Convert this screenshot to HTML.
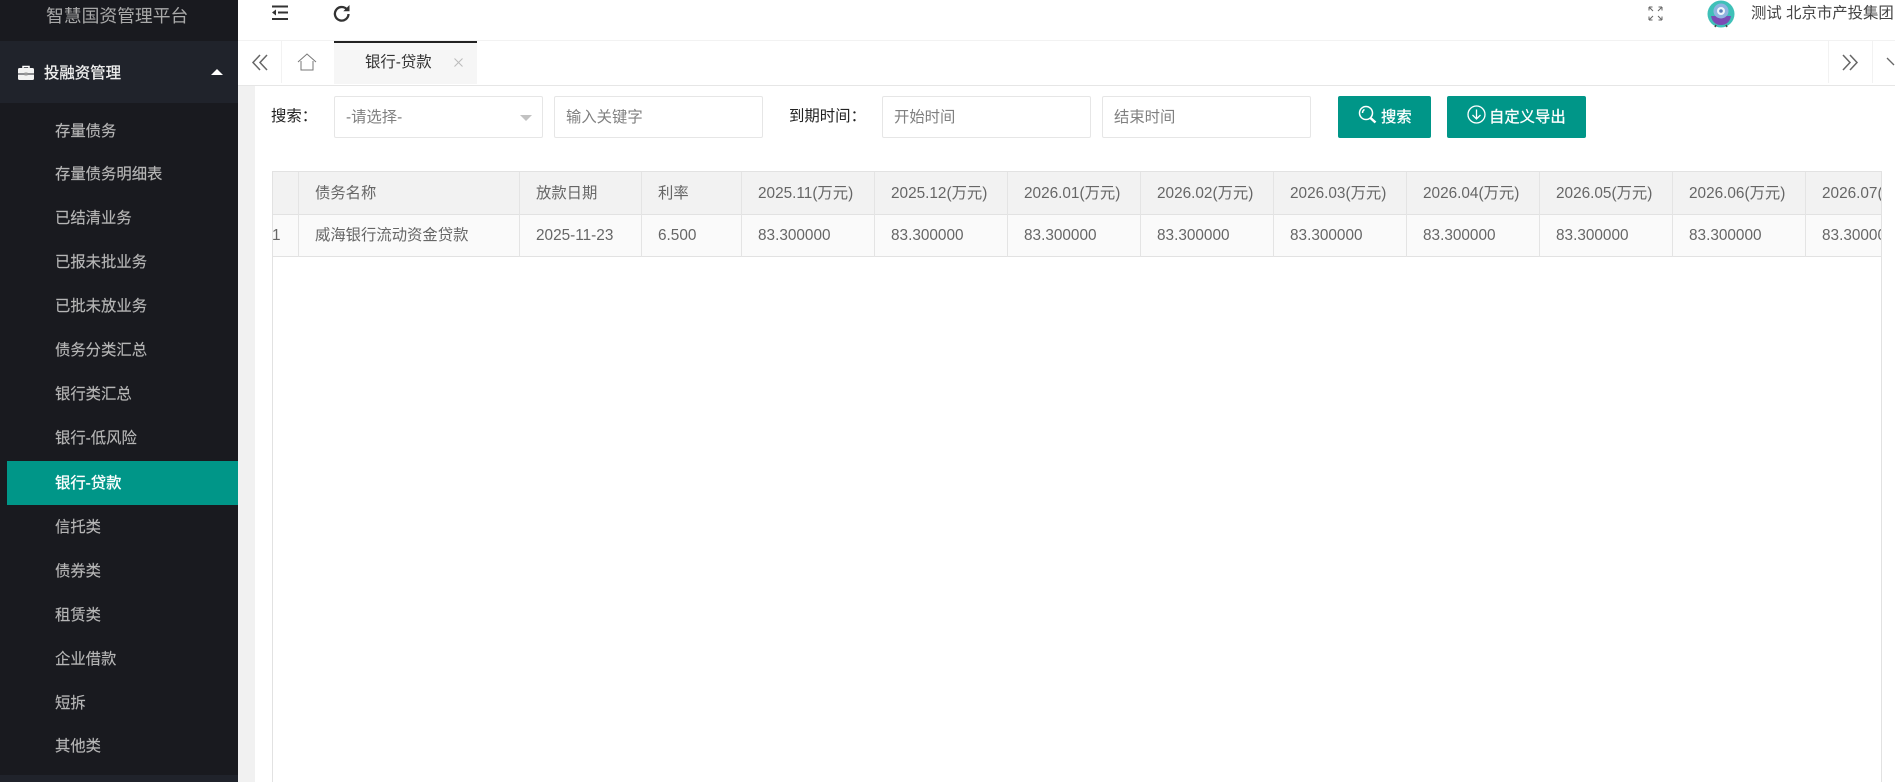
<!DOCTYPE html>
<html lang="zh"><head><meta charset="utf-8"><title>银行-贷款</title>
<style>
*{box-sizing:border-box}
html,body{margin:0;padding:0;width:1895px;height:782px;overflow:hidden;background:#fff;font-family:"Liberation Sans","Noto Sans CJK SC",sans-serif;font-size:15.350px;color:#666}
.a{position:absolute;white-space:nowrap}
#side{position:absolute;left:0;top:0;width:238px;height:782px;background:#191a1f}
.m{position:absolute;left:55px;color:#b6b6b6;font-size:15.350px;line-height:44px;height:44px;white-space:nowrap;-webkit-text-stroke:.15px #b6b6b6}
.in{position:absolute;top:96px;height:42px;width:209px;border:1px solid #e6e6e6;border-radius:2px;background:#fff;line-height:42px;padding-left:11px;color:#808080;font-size:15.350px}
.btn{position:absolute;top:96px;height:42px;background:#009688;border-radius:2px;color:#fff;line-height:44px;font-size:15.350px;-webkit-text-stroke:.25px #fff}
#tb{position:absolute;left:272px;top:171px;width:1610px;height:611px;border:1px solid #e2e2e2;border-bottom:0;overflow:hidden;background:#fff}
.h,.r{position:absolute;top:0;left:0;width:1700px}
.h{height:43px;background:#f2f2f2;border-bottom:1px solid #e2e2e2}
.r{top:43px;height:42px;background:#fafafa;border-bottom:1px solid #e2e2e2}
.v{position:absolute;top:0;width:1px;height:85px;background:#e4e4e4;z-index:2}
.t{position:absolute;white-space:nowrap;color:#666;font-size:15.350px}
.h .t{line-height:43px;top:0}
.r .t{line-height:41px;top:0}
</style></head><body>

<div id="side">
  <div class="a" style="left:46px;top:3px;font-size:17.800px;line-height:26px;color:#a9a9a9">智慧国资管理平台</div>
  <div class="a" style="left:0;top:41px;width:238px;height:62px;background:#20232b"></div>
  <svg class="a" style="left:17px;top:65px" width="18" height="16" viewBox="0 0 18 16"><path d="M6 3V1.500h6V3" fill="none" stroke="#fff" stroke-width="1.500"/><rect x="1" y="3" width="16" height="12" rx="1.500" fill="#f2f2f2"/><rect x="1" y="8.500" width="16" height="1" fill="#20232b"/><rect x="7.500" y="7.500" width="3" height="3" fill="#999"/></svg>
  <div class="a" style="left:44px;top:61px;line-height:26px;font-size:15.400px;color:#f0f0f0;-webkit-text-stroke:.3px #f0f0f0">投融资管理</div>
  <div class="a" style="left:211px;top:69px;width:0;height:0;border-left:6px solid transparent;border-right:6px solid transparent;border-bottom:6px solid #fff"></div>
  <div class="m" style="top:110px">存量债务</div>
  <div class="m" style="top:153px">存量债务明细表</div>
  <div class="m" style="top:197px">已结清业务</div>
  <div class="m" style="top:241px">已报未批业务</div>
  <div class="m" style="top:285px">已批未放业务</div>
  <div class="m" style="top:329px">债务分类汇总</div>
  <div class="m" style="top:373px">银行类汇总</div>
  <div class="m" style="top:417px">银行-低风险</div>
  <div class="a" style="left:7px;top:461px;width:231px;height:44px;background:#009688"></div>
  <div class="m" style="top:462px;color:#fff;-webkit-text-stroke:.3px #fff">银行-贷款</div>
  <div class="m" style="top:506px">信托类</div>
  <div class="m" style="top:550px">债券类</div>
  <div class="m" style="top:594px">租赁类</div>
  <div class="m" style="top:638px">企业借款</div>
  <div class="m" style="top:682px">短拆</div>
  <div class="m" style="top:725px">其他类</div>
  <div class="a" style="left:0;top:775px;width:238px;height:7px;background:#20232b"></div>
</div>

<div class="a" style="left:238px;top:85px;width:17px;height:697px;background:#f1f1f1"></div>

<!-- top bar -->
<svg class="a" style="left:271px;top:5px" width="18" height="16" viewBox="0 0 18 16"><path d="M1 1.500h16M7 7.500h10M1 14h16" stroke="#333" stroke-width="2" fill="none"/><path d="M1 7.500L5 4.500v6z" fill="#333"/></svg>
<svg class="a" style="left:333px;top:4px" width="18" height="19" viewBox="0 0 18 19"><path d="M15.500 10a6.800 6.800 0 1 1-2-5" fill="none" stroke="#333" stroke-width="2.300"/><path d="M16.500 1v6.200h-6.200z" fill="#333"/></svg>
<svg class="a" style="left:1648px;top:6px" width="15" height="15" viewBox="0 0 15 15" fill="none" stroke="#666" stroke-width="1"><path d="M1 1l4 4M1 1v3.500M1 1h3.500M14 1l-4 4M14 1v3.500M14 1h-3.500M1 14l4-4M1 14v-3.500M1 14h3.500M14 14l-4-4M14 14v-3.500M14 14h-3.500"/></svg>
<svg class="a" style="left:1707px;top:0" width="28" height="28" viewBox="0 0 28 28"><circle cx="14" cy="14" r="13.500" fill="#3fc0b8"/><path d="M4 16c1 6 5 9 10 9s9-3 10-9z" fill="#7a4bb5"/><circle cx="14" cy="11" r="7.500" fill="#8fb4e0"/><circle cx="14" cy="11" r="4" fill="#eef5fc"/><circle cx="14" cy="11" r="1.800" fill="#5a7fb8"/><path d="M9 25l-1 2M19 25l1 2" stroke="#444" stroke-width="1.500"/></svg>
<div class="a" style="left:1751px;top:3px;line-height:22px;color:#444;font-size:15.400px">测试 北京市产投集团</div>

<!-- tab bar -->
<div class="a" style="left:238px;top:40px;width:1657px;height:1px;background:#f2f2f2"></div>
<div class="a" style="left:238px;top:85px;width:1657px;height:1px;background:#e6e6e6"></div>
<div class="a" style="left:281px;top:41px;width:1px;height:42px;background:#f2f2f2"></div>
<div class="a" style="left:1828px;top:41px;width:1px;height:42px;background:#f2f2f2"></div>
<div class="a" style="left:1872px;top:41px;width:1px;height:42px;background:#f2f2f2"></div>
<svg class="a" style="left:251px;top:54px" width="18" height="17" viewBox="0 0 18 17" fill="none" stroke="#666" stroke-width="1.500"><path d="M9 1L2 8.500 9 16M16 1L9 8.500 16 16"/></svg>
<svg class="a" style="left:297px;top:53px" width="20" height="18" viewBox="0 0 20 18" fill="none" stroke="#777" stroke-width="1"><path d="M1 9L10 1l9 8M4 8v9h12V8"/></svg>
<div class="a" style="left:334px;top:41px;width:143px;height:43px;background:#f6f6f6;border-top:2px solid #222"></div>
<div class="a" style="left:365px;top:51px;line-height:24px;color:#333;font-size:15.400px">银行-贷款</div>
<svg class="a" style="left:454px;top:58px" width="9" height="9" viewBox="0 0 9 9" stroke="#bbb" stroke-width="1"><path d="M0.500 0.500l8 8M8.500 0.500l-8 8"/></svg>
<svg class="a" style="left:1841px;top:54px" width="18" height="17" viewBox="0 0 18 17" fill="none" stroke="#666" stroke-width="1.500"><path d="M2 1l7 7.500L2 16M9 1l7 7.500L9 16"/></svg>
<svg class="a" style="left:1886px;top:57px" width="9" height="11" viewBox="0 0 9 11" fill="none" stroke="#666" stroke-width="1.300"><path d="M1 1l7 7"/></svg>

<!-- search -->
<div class="a" style="left:271px;top:106px;line-height:22px;color:#222;font-size:15.400px">搜索：</div>
<div class="in" style="left:334px">-请选择-<span class="a" style="left:185px;top:18px;width:0;height:0;border-left:6px solid transparent;border-right:6px solid transparent;border-top:6px solid #c2c2c2"></span></div>
<div class="in" style="left:554px">输入关键字</div>
<div class="a" style="left:789px;top:106px;line-height:22px;color:#222;font-size:15.400px">到期时间：</div>
<div class="in" style="left:882px">开始时间</div>
<div class="in" style="left:1102px">结束时间</div>
<div class="btn" style="left:1338px;width:93px">
  <svg class="a" style="left:20px;top:9px" width="20" height="20" viewBox="0 0 20 20" fill="none" stroke="#fff" stroke-width="1.500"><circle cx="8" cy="8" r="6.500"/><path d="M12.500 13l5 4.500" stroke-width="2.500"/><path d="M4.500 8a4 4 0 0 1 2-3.500"/></svg>
  <span class="a" style="left:43px;top:0">搜索</span>
</div>
<div class="btn" style="left:1447px;width:139px">
  <svg class="a" style="left:20px;top:9px" width="19" height="19" viewBox="0 0 19 19" fill="none" stroke="#fff" stroke-width="1.300"><circle cx="9.500" cy="9.500" r="8.500"/><path d="M9.500 4.500v9M5.500 10l4 4 4-4"/></svg>
  <span class="a" style="left:42px;top:0">自定义导出</span>
</div>

<!-- table -->
<div id="tb">
  <div class="h">
    <span class="t" style="left:42px">债务名称</span>
    <span class="t" style="left:263px">放款日期</span>
    <span class="t" style="left:385px">利率</span>
    <span class="t" style="left:485px">2025.11(万元)</span>
    <span class="t" style="left:618px">2025.12(万元)</span>
    <span class="t" style="left:751px">2026.01(万元)</span>
    <span class="t" style="left:884px">2026.02(万元)</span>
    <span class="t" style="left:1017px">2026.03(万元)</span>
    <span class="t" style="left:1150px">2026.04(万元)</span>
    <span class="t" style="left:1283px">2026.05(万元)</span>
    <span class="t" style="left:1416px">2026.06(万元)</span>
    <span class="t" style="left:1549px">2026.07(万元)</span>
  </div>
  <div class="r">
    <span class="t" style="left:-1px">1</span>
    <span class="t" style="left:42px">威海银行流动资金贷款</span>
    <span class="t" style="left:263px">2025-11-23</span>
    <span class="t" style="left:385px">6.500</span>
    <span class="t" style="left:485px">83.300000</span>
    <span class="t" style="left:618px">83.300000</span>
    <span class="t" style="left:751px">83.300000</span>
    <span class="t" style="left:884px">83.300000</span>
    <span class="t" style="left:1017px">83.300000</span>
    <span class="t" style="left:1150px">83.300000</span>
    <span class="t" style="left:1283px">83.300000</span>
    <span class="t" style="left:1416px">83.300000</span>
    <span class="t" style="left:1549px">83.300000</span>
  </div>
  <div class="v" style="left:25px"></div>
  <div class="v" style="left:246px"></div>
  <div class="v" style="left:368px"></div>
  <div class="v" style="left:468px"></div>
  <div class="v" style="left:601px"></div>
  <div class="v" style="left:734px"></div>
  <div class="v" style="left:867px"></div>
  <div class="v" style="left:1000px"></div>
  <div class="v" style="left:1133px"></div>
  <div class="v" style="left:1266px"></div>
  <div class="v" style="left:1399px"></div>
  <div class="v" style="left:1532px"></div>
</div>
</body></html>
